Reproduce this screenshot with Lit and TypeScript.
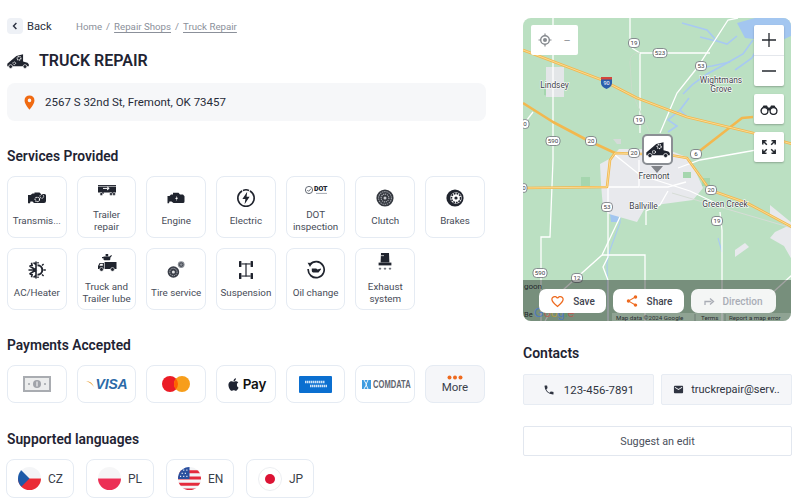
import { LitElement, html, css, svg } from "lit";
import { customElement } from "lit/decorators.js";

const mdi = (d: string, size = 16) => html`<svg class="mdi" width=${size} height=${size} viewBox="0 0 24 24"><path d=${d} fill="currentColor"></path></svg>`;

const P = {
  phone: "M6.62,10.79C8.06,13.62 10.38,15.94 13.21,17.38L15.41,15.18C15.69,14.9 16.08,14.82 16.43,14.93C17.55,15.3 18.75,15.5 20,15.5A1,1 0 0,1 21,16.5V20A1,1 0 0,1 20,21A17,17 0 0,1 3,4A1,1 0 0,1 4,3H7.5A1,1 0 0,1 8.5,4C8.5,5.25 8.7,6.45 9.07,7.57C9.18,7.92 9.1,8.31 8.82,8.59L6.62,10.79Z",
  mail: "M20,8L12,13L4,8V6L12,11L20,6M20,4H4C2.89,4 2,4.89 2,6V18A2,2 0 0,0 4,20H20A2,2 0 0,0 22,18V6C22,4.89 21.1,4 20,4Z",
  share: "M18,16.08C17.24,16.08 16.56,16.38 16.04,16.85L8.91,12.7C8.96,12.47 9,12.24 9,12C9,11.76 8.96,11.53 8.91,11.3L15.96,7.19C16.5,7.69 17.21,8 18,8A3,3 0 0,0 21,5A3,3 0 0,0 18,2A3,3 0 0,0 15,5C15,5.24 15.04,5.47 15.09,5.7L8.04,9.81C7.5,9.31 6.79,9 6,9A3,3 0 0,0 3,12A3,3 0 0,0 6,15C6.79,15 7.5,14.69 8.04,14.19L15.16,18.34C15.11,18.55 15.08,18.77 15.08,19C15.08,20.61 16.39,21.91 18,21.91C19.61,21.91 20.92,20.61 20.92,19A2.92,2.92 0 0,0 18,16.08Z",
  heart: "M12.1,18.55L12,18.65L11.89,18.55C7.14,14.24 4,11.39 4,8.5C4,6.5 5.5,5 7.5,5C9.04,5 10.54,6 11.07,7.36H12.93C13.46,6 14.96,5 16.5,5C18.5,5 20,6.5 20,8.5C20,11.39 16.86,14.24 12.1,18.55M16.5,3C14.76,3 13.09,3.81 12,5.08C10.91,3.81 9.24,3 7.5,3C4.42,3 2,5.41 2,8.5C2,12.27 5.4,15.36 10.55,20.03L12,21.35L13.45,20.03C18.6,15.36 22,12.27 22,8.5C22,5.41 19.58,3 16.5,3Z",
  pin: "M12,11.5A2.5,2.5 0 0,1 9.5,9A2.5,2.5 0 0,1 12,6.5A2.5,2.5 0 0,1 14.5,9A2.5,2.5 0 0,1 12,11.5M12,2A7,7 0 0,0 5,9C5,14.25 12,22 12,22C12,22 19,14.25 19,9A7,7 0 0,0 12,2Z",
  apple: "M18.71 19.5C17.88 20.74 17 21.95 15.66 21.97C14.32 22 13.89 21.18 12.37 21.18C10.84 21.18 10.37 21.95 9.1 22C7.79 22.05 6.8 20.68 5.96 19.47C4.25 17 2.94 12.45 4.7 9.39C5.57 7.87 7.13 6.91 8.82 6.88C10.1 6.86 11.32 7.75 12.11 7.75C12.89 7.75 14.37 6.68 15.92 6.84C16.57 6.87 18.39 7.1 19.56 8.82C19.47 8.88 17.39 10.1 17.41 12.63C17.44 15.65 20.06 16.66 20.09 16.67C20.06 16.74 19.67 18.11 18.71 19.5M13 3.5C13.73 2.67 14.94 2.04 15.94 2C16.07 3.17 15.6 4.35 14.9 5.19C14.21 6.04 13.07 6.7 11.95 6.61C11.8 5.46 12.36 4.26 13 3.5Z",
};

const truck = (w: number, h: number) => html`<svg width=${w} height=${h} viewBox="0 0 23 16">
  <path fill="#20242e" d="M.3 13.400V10.800L9.800 2.800 16.800 1V8.600L21.400 9.800 22.800 11.400V13.400Z"></path>
  <circle cx="3.800" cy="13.800" r="2" fill="#20242e" stroke="#fff" stroke-width=".7"></circle>
  <circle cx="18.800" cy="13.800" r="2" fill="#20242e" stroke="#fff" stroke-width=".7"></circle>
  <path d="M6.600 14.400H15.800V15.600H6.600Z" fill="#fff"></path>
  <circle cx="12.600" cy="5.200" r="1.900" fill="none" stroke="#fff" stroke-width="1.200" stroke-dasharray="1.100 .6"></circle>
  <circle cx="7.600" cy="10.400" r="1.400" fill="none" stroke="#fff" stroke-width="1" stroke-dasharray=".9 .5"></circle>
</svg>`;

const ICONS: Record<string, unknown> = {
  transmission: html`<svg width="20" height="20" viewBox="0 0 20 20"><path fill="#20242e" d="M1 7h2.500L5.500 5.500h2V4.500h5L14 6h3.500a1.500 1.500 0 0 1 1.500 1.500v5.500a2 2 0 0 1-2 2H7L5.500 13.500h-2L3 15.200H1Z"></path><circle cx="10.300" cy="11.400" r="2.200" fill="none" stroke="#fff" stroke-width="1.100" stroke-dasharray="1.200 .7"></circle><circle cx="14.800" cy="8.400" r="1.900" fill="none" stroke="#fff" stroke-width="1" stroke-dasharray="1.100 .7"></circle></svg>`,
  trailer: html`<svg width="20" height="20" viewBox="0 0 20 20"><path fill="#20242e" d="M1 3h18v7.400h-1.600V12h-3V10.400H6.600V12H5V10.400H1Z"></path><circle cx="4.300" cy="12" r="1.500" fill="#20242e" stroke="#fff" stroke-width=".5"></circle><circle cx="14" cy="12" r="1.500" fill="#20242e" stroke="#fff" stroke-width=".5"></circle><circle cx="17" cy="12" r="1.500" fill="#20242e" stroke="#fff" stroke-width=".5"></circle><path stroke="#fff" stroke-width="1" d="M6 6.400h6M10 4.800l2.200 1.600L10 8" fill="none"></path><path stroke="#fff" stroke-width=".6" d="M1 4.400h18" fill="none"></path></svg>`,
  engine: html`<svg width="20" height="20" viewBox="0 0 20 20"><path fill="#20242e" d="M1.500 8h2L5 6.500h2V4.800h5.500L14 6.500h3l1.500 1.700v5.300a1.500 1.500 0 0 1-1.500 1.500H7.500L5.500 13.500H3.500L3 15.200H1.500Z"></path><path fill="#fff" d="M11.200 7.600 9.200 11h1.400l-.8 2.400 2.200-3.600h-1.400Z"></path></svg>`,
  electric: html`<svg width="20" height="20" viewBox="0 0 20 20"><path fill="none" stroke="#20242e" stroke-width="1.600" stroke-linecap="round" d="M5.600 3.200A8.200 8.200 0 1 0 14.400 3.200"></path><path fill="none" stroke="#20242e" stroke-width="1.600" d="M7 2.400A8.200 8.200 0 0 1 13 2.400"></path><path fill="#20242e" d="M11.200 3.800 6.400 11h3l-.8 5.200L13.600 8.800h-3Z"></path></svg>`,
  dot: html`<svg width="24" height="20" viewBox="0 0 24 20"><circle cx="5" cy="8" r="3.600" fill="none" stroke="#555b66" stroke-width=".9"></circle><path d="M3.300 8l1.300 1.300 2.400-2.600" fill="none" stroke="#555b66" stroke-width=".9"></path><text x="10" y="9" font-size="7" font-weight="900" font-family="Roboto,sans-serif" fill="#20242e">DOT</text><path d="M12 11.400h11" stroke="#9aa0a8" stroke-width=".9"></path></svg>`,
  clutch: html`<svg width="20" height="20" viewBox="0 0 20 20"><circle cx="10" cy="10" r="8.600" fill="#34383f"></circle><circle cx="10" cy="10" r="6.400" fill="none" stroke="#9a9ea5" stroke-width="1.100" stroke-dasharray="1.400 .8"></circle><circle cx="10" cy="10" r="3.900" fill="none" stroke="#b0b3b9" stroke-width="1.100" stroke-dasharray="1.200 .8"></circle><circle cx="10" cy="10" r="1.500" fill="#c6c8cc"></circle></svg>`,
  brakes: html`<svg width="20" height="20" viewBox="0 0 20 20"><circle cx="10" cy="10" r="8.600" fill="#20242e"></circle><circle cx="11" cy="10" r="5.800" fill="#fff"></circle><circle cx="11" cy="10" r="4.600" fill="none" stroke="#20242e" stroke-width="1.600" stroke-dasharray="1.800 .9"></circle><circle cx="11" cy="10" r="1.600" fill="#20242e"></circle></svg>`,
  ac: html`<svg width="20" height="20" viewBox="0 0 20 20"><g stroke="#20242e" stroke-width="1.600" fill="none"><path d="M9 1.500v17M2.500 6l6.500 4-6.500 4M1.500 10h7.500M4.500 2.800l.6 2.600-2.600.6M4.500 17.200l.6-2.600-2.600-.6M6.500 2.600 9 4.600M6.500 17.400 9 15.400"></path><path stroke-width="2" d="M10.500 5.200a4.800 4.800 0 0 1 0 9.600"></path><path stroke-width="1.400" d="M16.400 10H18.800M15 5.600l1.600-1.600M15 14.400l1.600 1.600M11 2v1.600M11 16.400v1.600"></path></g></svg>`,
  lube: html`<svg width="20" height="24" viewBox="0 0 20 24"><path fill="#20242e" d="M6.500 4.400h6l1.800-1.400.6.700-1.600 2.100v1.500a1 1 0 0 1-1 1H7.500a1 1 0 0 1-1-1V6.200H5V4.900h1.500Z"></path><path fill="#20242e" d="M8.600 2h2.600v2.400H8.600Z"></path><path fill="#20242e" d="M1 17v-3.100L2.600 11H7v-1h12.500v7Z"></path><path d="M3.400 11.800h2.400v2H2.400Z" fill="#fff"></path><path stroke="#fff" stroke-width=".7" d="M7.400 10v7"></path><circle cx="4.500" cy="17.400" r="1.900" fill="#20242e" stroke="#fff" stroke-width=".6"></circle><circle cx="15.500" cy="17.400" r="1.900" fill="#20242e" stroke="#fff" stroke-width=".6"></circle></svg>`,
  tire: html`<svg width="20" height="20" viewBox="0 0 20 20"><circle cx="7.400" cy="12" r="5.800" fill="#3a3e48"></circle><circle cx="7.400" cy="12" r="3.700" fill="none" stroke="#b5b8bd" stroke-width="1" stroke-dasharray="1.200 .8"></circle><circle cx="7.400" cy="12" r="1.500" fill="#e0e1e3"></circle><circle cx="15.200" cy="4.600" r="3.400" fill="#8a8e95"></circle><circle cx="15.200" cy="4.600" r="1.800" fill="none" stroke="#3a3e48" stroke-width=".9"></circle></svg>`,
  suspension: html`<svg width="20" height="20" viewBox="0 0 20 20"><g fill="#20242e"><rect x="3" y="1" width="2.400" height="6" rx=".5"></rect><rect x="14.600" y="1" width="2.400" height="6" rx=".5"></rect><rect x="3" y="13" width="2.400" height="6" rx=".5"></rect><rect x="14.600" y="13" width="2.400" height="6" rx=".5"></rect><rect x="5.400" y="3.400" width="9.200" height="1.100"></rect><rect x="5.400" y="15.500" width="9.200" height="1.100"></rect><rect x="9.400" y="3.400" width="1.200" height="13"></rect></g></svg>`,
  oil: html`<svg width="20" height="20" viewBox="0 0 20 20"><path fill="none" stroke="#20242e" stroke-width="1.700" d="M4 4.600A8 8 0 1 1 2.200 9"></path><path fill="#20242e" d="M1.600 2.800 6.200 3 4 7Z"></path><path fill="#20242e" d="M5.800 8.400h4.400l1.300 1.200 3.200-1 .4.600-2.600 3.200H7.200a1.400 1.400 0 0 1-1.400-1.400Z"></path></svg>`,
  exhaust: html`<svg width="20" height="24" viewBox="0 0 20 24"><path fill="#20242e" d="M6 1h8l.4 9.600H5.600Z"></path><path fill="#20242e" d="M3.600 10.600h12.800V13.400H3.600Z"></path><path fill="#fff" d="M6 3.400h3v.7H6Z"></path><path stroke="#555b66" stroke-width=".8" d="M5 15.600v2.400M10 15.600v2.400M15 15.600v2.400M3.800 16.600h2.400M8.800 16.600h2.400M13.800 16.600h2.400"></path></svg>`,
};

const SERVICES: [string, string][] = [
  ["transmission", "Transmis..."], ["trailer", "Trailer\nrepair"], ["engine", "Engine"], ["electric", "Electric"],
  ["dot", "DOT\ninspection"], ["clutch", "Clutch"], ["brakes", "Brakes"], ["ac", "AC/Heater"],
  ["lube", "Truck and\nTrailer lube"], ["tire", "Tire service"], ["suspension", "Suspension"], ["oil", "Oil change"],
  ["exhaust", "Exhaust\nsystem"],
];

const shield = (x: number, y: number, t: string, w = 11) => svg`
  <rect x=${x - w / 2} y=${y - 4.5} width=${w} height="9" rx="3.500" fill="#fff" stroke="#6d7278" stroke-width=".8"></rect>
  <text x=${x} y=${y + 2.2} text-anchor="middle" font-size="6.200" font-family="Roboto,sans-serif" fill="#3c4043">${t}</text>`;

const label = (x: number, y: number, t: string) => svg`<text class="ml" x=${x} y=${y} text-anchor="middle">${t}</text>`;

const mapArt = svg`
<rect x="523" y="18" width="268" height="303" fill="#bbe0c2"></rect>
<path d="M737 23 755 18H791V36L778 42 762 40 745 38Z" fill="#a3c6f0"></path>
<g fill="none" stroke="#a8c9f2" stroke-width="1.600">
  <path d="M682 23 707 30 717 41 727 44 737 36"></path>
  <path d="M700 37 716 41"></path>
  <path d="M753 40 743 54 720 67 707 74 693 84 683 94"></path>
  <path d="M762 40 752 58 735 70"></path>
  <path d="M730 62 712 66 700 68"></path>
  <path d="M680 110 668 120 677 126 668 132"></path>
  <path d="M689 98 680 110 688 118"></path>
  <path d="M620 213 620 223 610 250 607 262 608 320" stroke-width="1.100"></path>
  <path d="M718 238 722 252" stroke-width="1.100"></path>
</g>
<path d="M666 172 680 160 676 172 670 176Z M610 214 620 209 618 222 611 222Z" fill="#a3c6f0"></path>
<g fill="#e8e9ed">
  <path d="M611 158l8-9 20 0 32 2 18 7 6 12 8 18-10 12-30 4-18 4-8 14-28-8-6-6-2-24-1-20Z"></path>
  <path d="M770 205l22 18v6l-10-6-12-8Z M775 232l17-8v36l-8-14-14-8Z"></path>
  <path d="M735 250l10-7 4 4-14 10Z"></path>
</g>
<g fill="#a5d6ae"><path d="M548 96h6v-14h6v-9h-10v12h-6v10Z"></path><path d="M581 177h9v9h-9Z"></path><path d="M702 178h8v8h-8Z"></path><path d="M683 172h8v6h-8Z"></path></g>
<path d="M546 67h18v30h-18Z" fill="#e3e6e8"></path>
<path d="M613 139h8v5h-4Z" fill="#d5dad9"></path>
<g fill="none" stroke="#fff" stroke-width="1.300">
  <path d="M630 18v22"></path><path d="M632 48 640 53v80"></path><path d="M640 53h70"></path>
  <path d="M660 133 677 93 697 68 728 20 738 18"></path>
  <path d="M553 18v142l-3 77h-9v36l0 48"></path>
  <path d="M523 125 533 112"></path>
  <path d="M615 155 640 175l50 16 30 14"></path>
  <path d="M639 160v27h-31"></path>
  <path d="M640 187h28l18-5"></path>
  <path d="M678 168 700 160 745 152 768 148"></path>
  <path d="M608 187v70l-5 10 5 13v41"></path>
  <path d="M620 217 602 255 563 290 545 321"></path>
  <path d="M602 255h43v66"></path>
  <path d="M646 225v-14l14-6 8-14"></path>
  <path d="M720 212 722 230v91"></path>
  <path d="M770 295 792 275"></path>
  <path d="M672 193 792 228" stroke="#d6dcd6" stroke-width="1"></path>
  <path d="M640 53c-8 0-10 4-10 10l2 30 18 40" stroke="#c8dcc9" stroke-width="1"></path>
</g>
<g fill="none" stroke="#f2b84f" stroke-width="2.600" stroke-linejoin="round">
  <path d="M523 50 602 80 637 98 687 117 753 133 792 144"></path>
  <path d="M523 103 553 122 587 140 615 153"></path>
  <path d="M523 188 607 187 610 160 615 153 670 155 687 158 710 190 747 203 792 227"></path>
  <path d="M697 153 742 118 753 117"></path>
</g>
<g fill="none" stroke="#fdeab0" stroke-width=".7">
  <path d="M523 50 602 80 637 98 687 117 753 133 792 144"></path>
  <path d="M523 188 607 187 610 160 615 153 670 155 687 158 710 190 747 203 792 227"></path>
</g>
${label(554.5, 88, "Lindsey")}${label(721, 82.5, "Wightmans")}${label(721, 91.5, "Grove")}
${label(654, 179, "Fremont")}${label(643.5, 209, "Ballville")}${label(725, 207, "Green Creek")}
${shield(634, 43, "19")}${shield(660, 53, "523", 14)}${shield(701, 66, "53")}
${shield(639, 120, "19")}${shield(525, 124, "0", 8)}${shield(553, 141, "590", 14)}${shield(591, 141, "20")}
${shield(634, 153, "20")}${shield(696, 154, "6")}${shield(711, 190, "20")}${shield(607, 207, "53")}
${shield(717, 221, "19")}${shield(540, 273, "590", 14)}${shield(577, 278, "12")}${shield(524, 188, "0", 6)}
<path d="M601 77h11v6c0 3-3 5-5.500 6-2.500-1-5.500-3-5.500-6Z" fill="#2a5dab"></path>
<path d="M601 77h11v2.400h-11Z" fill="#d4463b"></path>
<text x="606.500" y="85" text-anchor="middle" font-size="5.500" font-family="Roboto,sans-serif" fill="#fff">90</text>
<rect x="523" y="280" width="268" height="41" fill="#000" opacity=".36"></rect>
<text x="524" y="289" font-size="8" font-family="Roboto,sans-serif" fill="#25282c">goon</text>
<text x="524" y="317" font-size="7.500" font-family="Roboto,sans-serif" fill="#25282c">Be</text>
<text x="534" y="317" font-size="12.500" font-family="'Liberation Sans',sans-serif" opacity=".85"><tspan fill="#4a78c8">G</tspan><tspan fill="#b85a50">o</tspan><tspan fill="#b8a040">o</tspan><tspan fill="#4a78c8">g</tspan><tspan fill="#4f9a60">l</tspan><tspan fill="#b85a50">e</tspan></text>
<rect x="612" y="313" width="179" height="8" fill="#fff" opacity=".18"></rect>
<text x="616" y="319.500" font-size="6.200" font-family="Roboto,sans-serif" fill="#2a2d31">Map data ©2024 Google</text>
<text x="701" y="319.500" font-size="6.200" font-family="Roboto,sans-serif" fill="#2a2d31">Terms</text>
<text x="729" y="319.500" font-size="6.200" font-family="Roboto,sans-serif" fill="#2a2d31">Report a map error</text>
<path d="M695 314v7M725 314v7" stroke="#5c6662" stroke-width=".6"></path>
`;

@customElement("app-root")
export class AppRoot extends LitElement {
  static styles = css`
    :host { display: block; width: 800px; height: 501px; overflow: hidden; background: #fff; font-family: Roboto, sans-serif; color: #1f2433; }
    * { box-sizing: border-box; }
    svg { display: block; flex: none; }
    .page { display: flex; gap: 37px; padding-left: 7px; height: 501px; }
    .left { width: 479px; flex: none; padding-top: 18px; }
    .right { width: 269px; flex: none; padding-top: 18px; }
    .top { display: flex; align-items: center; height: 16px; }
    .back-btn { width: 16px; height: 16px; border-radius: 4px; background: #eef1f6; display: flex; align-items: center; justify-content: center; }
    .back { font-size: 11.200px; margin-left: 4px; color: #2a3040; width: 49px; }
    .crumbs { display: flex; gap: 4px; font-size: 9.700px; color: #8b909a; padding-top: 1px; }
    .crumbs u { text-underline-offset: 2px; }
    .title { display: flex; align-items: center; gap: 10px; margin-top: 17px; height: 20px; }
    h1 { margin: 0; font-size: 16px; font-weight: 600; color: #1f2433; line-height: 20px; }
    .addr { margin-top: 12px; height: 38px; border-radius: 8px; background: #f6f7f9; display: flex; align-items: center; padding-left: 14px; gap: 7px; font-size: 11.500px; color: #262b38; }
    .addr .mdi { color: #f06a12; }
    h2 { margin: 0; font-size: 13.800px; font-weight: 600; line-height: 18px; color: #1f2433; }
    .services-h { margin-top: 26px; }
    .grid { display: grid; grid-template-columns: repeat(7, 59.700px); column-gap: 10px; row-gap: 10px; margin-top: 11px; }
    .card { height: 62px; border: 1px solid #e5ebf3; border-radius: 8px; display: flex; flex-direction: column; align-items: center; justify-content: center; gap: 7px; }
    .ico { height: 20px; display: flex; align-items: center; justify-content: center; }
    .lbl { font-size: 9.800px; line-height: 12px; text-align: center; color: #474c58; white-space: pre-line; }
    .pay-h { margin-top: 26px; }
    .pay { display: grid; grid-template-columns: repeat(7, 59.700px); column-gap: 10px; margin-top: 11px; }
    .pcard { height: 38px; border: 1px solid #e5ebf3; border-radius: 8px; display: flex; align-items: center; justify-content: center; gap: 2px; }
    .pcard.more { background: #f5f6f9; flex-direction: column; gap: 1px; font-size: 11.500px; color: #3a3f4b; line-height: 13px; }
    .visa { font-family: "Liberation Sans", sans-serif; font-weight: 700; font-style: italic; font-size: 14px; color: #2c6aa8; letter-spacing: -.2px; }
    .applepay { font-family: Inter, sans-serif; font-size: 13.500px; font-weight: 600; color: #111; letter-spacing: -.2px; }
    .comdata { font-family: "Liberation Sans", sans-serif; font-size: 11.500px; font-weight: 700; color: #5f6570; transform: scaleX(.66); transform-origin: left center; width: 36px; white-space: nowrap; }
    .lang-h { margin-top: 27px; }
    .langs { display: flex; gap: 12px; margin-top: 11px; margin-left: -1px; }
    .chip { width: 68px; height: 39px; border: 1px solid #e5ebf3; border-radius: 8px; display: flex; align-items: center; padding-left: 11px; gap: 7px; font-size: 12px; color: #3a3f4b; }
    .map { position: relative; width: 268px; height: 303px; border-radius: 8px; overflow: hidden; }
    .map > svg.art { position: absolute; inset: 0; }
    .ml { font: 400 8.400px Roboto, sans-serif; fill: #3d4148; stroke: #fff; stroke-width: 1.200px; paint-order: stroke; }
    .ctl { position: absolute; background: #fff; display: flex; align-items: center; justify-content: center; color: #24282f; box-shadow: 0 1px 2px rgba(0,0,0,.25); }
    .geo { left: 8px; top: 7px; width: 47px; height: 30px; border-radius: 2px; gap: 11px; box-shadow: none; color: #8e9297; font-size: 11px; }
    .zoom { left: 231px; top: 7px; width: 30px; height: 61px; flex-direction: column; border-radius: 2px; }
    .zoom div { height: 30px; width: 30px; display: flex; align-items: center; justify-content: center; }
    .zoom div + div { height: 31px; border-top: 1px solid #e4e7ec; }
    .bino { left: 231px; top: 76px; width: 30px; height: 30px; border-radius: 2px; }
    .exp { left: 231px; top: 114px; width: 30px; height: 30px; border-radius: 2px; }
    .marker { position: absolute; left: 119px; top: 116px; width: 31px; height: 31px; background: #fff; border: 2px solid #8b8f94; border-radius: 5px; display: flex; align-items: center; justify-content: center; }
    .tip { position: absolute; left: 128px; top: 148px; width: 0; height: 0; border-left: 6px solid transparent; border-right: 6px solid transparent; border-top: 7px solid #808388; }
    .acts { position: absolute; left: 16px; top: 271px; display: flex; gap: 7px; }
    .act { height: 24px; border-radius: 7px; background: #fff; display: flex; align-items: center; justify-content: center; gap: 8px; font-size: 10px; font-weight: 500; color: #3f4450; }
    .act .mdi { color: #ee6a1f; }
    .save { width: 67px; } .share { width: 71px; }
    .dir { width: 85px; color: #a9adb5; background: rgba(255,255,255,.92); gap: 7px; }
    .contacts-h { margin-top: 23px; font-size: 14px; }
    .cts { display: flex; gap: 7px; margin-top: 12px; }
    .ct { width: 131px; height: 31px; background: #f5f6f9; border: 1px solid #e7ecf3; border-radius: 2px; display: flex; align-items: center; justify-content: center; font-size: 11px; color: #2f3441; white-space: nowrap; }
    .ct.ph { gap: 9px; font-size: 11.400px; }
    .ct.em { gap: 7px; }
    .edit { margin-top: 21px; height: 30px; border: 1px solid #e2e7ef; border-radius: 2px; display: flex; align-items: center; justify-content: center; font-size: 10.800px; color: #4a4f5b; }
  `;

  private flag(kind: string) {
    const body: Record<string, unknown> = {
      cz: svg`<rect width="22" height="11" fill="#f4f5f7"></rect><rect y="11" width="22" height="11" fill="#ea2b35"></rect><path d="M0 0 11 11 0 22Z" fill="#1d5aa8"></path>`,
      pl: svg`<rect width="22" height="11" fill="#f6f6f7"></rect><rect y="11" width="22" height="11" fill="#ec2f55"></rect>`,
      en: svg`<rect width="22" height="22" fill="#f3f4f6"></rect><path d="M0 3h22v3H0ZM0 9h22v3H0ZM0 15h22v3H0ZM0 20.500h22v2H0Z" fill="#e42a3c"></path><rect width="11" height="11.500" fill="#2a4f9e"></rect><path d="M2 3h1M5 3h1M8 3h1M3.500 6h1M6.500 6h1M2 9h1M5 9h1M8 9h1" stroke="#fff" stroke-width="1.200"></path>`,
    };
    if (kind === "jp")
      return html`<svg width="24" height="24" viewBox="0 0 24 24"><circle cx="12" cy="12" r="11.500" fill="#fff" stroke="#eceef1"></circle><circle cx="12" cy="12" r="5" fill="#dc1334"></circle></svg>`;
    return html`<svg width="23" height="23" viewBox="0 0 22 22"><defs><clipPath id="c${kind}"><circle cx="11" cy="11" r="11"></circle></clipPath></defs><g clip-path="url(#c${kind})">${body[kind]}</g></svg>`;
  }

  render() {
    return html`<div class="page">
      <div class="left">
        <div class="top">
          <div class="back-btn"><svg width="8" height="8" viewBox="0 0 8 8"><path d="M5.400 1 2.500 4l2.900 3" fill="none" stroke="#2a3040" stroke-width="1.400"></path></svg></div>
          <span class="back">Back</span>
          <div class="crumbs"><span>Home</span><span>/</span><u>Repair Shops</u><span>/</span><u>Truck Repair</u></div>
        </div>
        <div class="title">${truck(22, 16)}<h1>TRUCK REPAIR</h1></div>
        <div class="addr">${mdi(P.pin, 17)}<span>2567 S 32nd St, Fremont, OK 73457</span></div>

        <h2 class="services-h">Services Provided</h2>
        <div class="grid">
          ${SERVICES.map(([ic, t]) => html`<div class="card"><div class="ico">${ICONS[ic]}</div><div class="lbl">${t}</div></div>`)}
        </div>

        <h2 class="pay-h">Payments Accepted</h2>
        <div class="pay">
          <div class="pcard"><svg width="28" height="16" viewBox="0 0 28 16"><rect width="28" height="16" fill="#a9acb1"></rect><rect x="2" y="2" width="24" height="12" fill="#eceded"></rect><circle cx="14" cy="8" r="4" fill="#a0a3a9"></circle><path d="M14 5.500v5" stroke="#fff" stroke-width="1"></path><circle cx="6" cy="8" r="1" fill="#a0a3a9"></circle><circle cx="22" cy="8" r="1" fill="#a0a3a9"></circle></svg></div>
          <div class="pcard"><svg width="8" height="8" viewBox="0 0 8 8" class="wing"><path d="M0 1C4 1 6.500 3 8 7 6 4 3 2 0 1Z" fill="#e9a13b"></path></svg><span class="visa">VISA</span></div>
          <div class="pcard"><svg width="28" height="16" viewBox="0 0 28 16"><circle cx="8" cy="8" r="8" fill="#eb1c26"></circle><circle cx="20" cy="8" r="8" fill="#f79e1b"></circle><path d="M14 2.700a8 8 0 0 1 0 10.600 8 8 0 0 1 0-10.600Z" fill="#ff5f00"></path></svg></div>
          <div class="pcard">${mdi(P.apple, 15)}<span class="applepay">Pay</span></div>
          <div class="pcard"><svg width="33" height="17" viewBox="0 0 33 17"><rect width="33" height="17" rx="1" fill="#0b6fd0"></rect><path d="M6 6h20M11 10h17" stroke="#cfe3f7" stroke-width="2.400" stroke-dasharray="1.500 .5"></path></svg></div>
          <div class="pcard"><svg width="9" height="9" viewBox="0 0 9 9"><rect width="9" height="9" fill="#3e9ce0"></rect><path d="M2 0 4.500 4.500 2 9M6 0 4 4.500 6 9" stroke="#fff" stroke-width=".9" fill="none"></path></svg><span class="comdata">COMDATA</span></div>
          <div class="pcard more"><svg width="18" height="5" viewBox="0 0 18 5"><circle cx="3.500" cy="2.500" r="2" fill="#ee6a1f"></circle><circle cx="9" cy="2.500" r="2" fill="#ee6a1f"></circle><circle cx="14.500" cy="2.500" r="2" fill="#ee6a1f"></circle></svg><span>More</span></div>
        </div>

        <h2 class="lang-h">Supported languages</h2>
        <div class="langs">
          <div class="chip">${this.flag("cz")}CZ</div>
          <div class="chip">${this.flag("pl")}PL</div>
          <div class="chip">${this.flag("en")}EN</div>
          <div class="chip">${this.flag("jp")}JP</div>
        </div>
      </div>

      <div class="right">
        <div class="map">
          <svg class="art" width="268" height="303" viewBox="523 18 268 303">${mapArt}</svg>
          <div class="ctl geo"><svg width="14" height="14" viewBox="0 0 14 14"><circle cx="7" cy="7" r="4.300" fill="none" stroke="#85898e" stroke-width="1.400"></circle><circle cx="7" cy="7" r="2" fill="#85898e"></circle><path d="M7 .5v2.400M7 11.100v2.400M.5 7h2.400M11.100 7h2.400" stroke="#85898e" stroke-width="1.200"></path></svg><span>–</span></div>
          <div class="ctl zoom">
            <div><svg width="14" height="14" viewBox="0 0 14 14"><path d="M7 0v14M0 7h14" stroke="#24282f" stroke-width="1.300"></path></svg></div>
            <div><svg width="14" height="14" viewBox="0 0 14 14"><path d="M0 7h14" stroke="#24282f" stroke-width="1.300"></path></svg></div>
          </div>
          <div class="ctl bino"><svg width="18" height="11" viewBox="0 0 18 11"><path d="M3.500 1.500h3.500l1 2h2l1-2h3.500l3 5H.5Z" fill="#24282f"></path><circle cx="4.500" cy="7" r="3.400" fill="#fff" stroke="#24282f" stroke-width="1.300"></circle><circle cx="13.500" cy="7" r="3.400" fill="#fff" stroke="#24282f" stroke-width="1.300"></circle></svg></div>
          <div class="ctl exp"><svg width="14" height="14" viewBox="0 0 14 14"><g fill="none" stroke="#24282f" stroke-width="1.500"><path d="M.8 4.500V.8h3.700M.8.8l4 4M13.200 4.500V.8H9.500M13.200.8l-4 4M.8 9.500v3.700h3.700M.8 13.200l4-4M13.200 9.500v3.700H9.500M13.200 13.200l-4-4"></path></g></svg></div>
          <div class="marker">${truck(24, 17)}</div>
          <div class="tip"></div>
          <div class="acts">
            <div class="act save">${mdi(P.heart, 15)}<span>Save</span></div>
            <div class="act share">${mdi(P.share, 14)}<span>Share</span></div>
            <div class="act dir"><svg width="11" height="8" viewBox="0 0 11 8"><path d="M1 8V4.500h6.500M6 1.500 9.500 4.500 6 7.500" fill="none" stroke="#a9adb5" stroke-width="1.300"></path></svg><span>Direction</span></div>
          </div>
        </div>
        <h2 class="contacts-h">Contacts</h2>
        <div class="cts">
          <div class="ct ph">${mdi(P.phone, 12)}<span>123-456-7891</span></div>
          <div class="ct em">${mdi(P.mail, 11)}<span>truckrepair@serv..</span></div>
        </div>
        <div class="edit">Suggest an edit</div>
      </div>
    </div>`;
  }
}
